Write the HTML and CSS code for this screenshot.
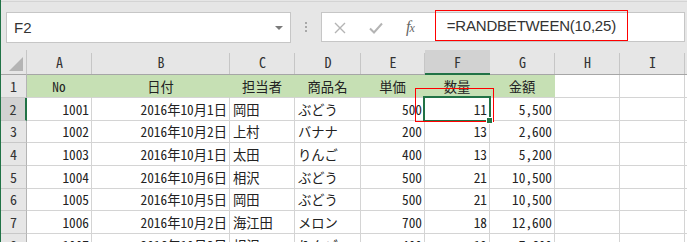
FILE: index.html
```html
<!DOCTYPE html>
<html lang="ja">
<head>
    <meta charset="UTF-8">
    <meta name="viewport" content="width=device-width, initial-scale=1.0">
    <title>RANDBETWEEN</title>
    <link rel="stylesheet" href="styles.css">
</head>
<body>
    <div class="window">
        <div class="toolbar">
            <div class="name-box">
                <span>F2</span>
                <span class="drop"></span>
            </div>
            <div class="grip"><i></i><i></i><i></i></div>
            <div class="formula-bar">
                <svg class="fb-cancel" width="12" height="12" viewBox="0 0 12 12">
                    <path d="M1 1 L11 11 M11 1 L1 11" stroke="#b4b4b4" stroke-width="1.4" fill="none"/>
                </svg>
                <svg class="fb-enter" width="14" height="12" viewBox="0 0 14 12">
                    <path d="M1 6.5 L5 10.5 L13 1.5" stroke="#b4b4b4" stroke-width="2" fill="none"/>
                </svg>
                <span class="fb-fx"><i>f</i><i class="x">x</i></span>
                <span class="formula-text">=RANDBETWEEN(10,25)</span>
            </div>
        </div>

        <div class="sheet">
            <div class="corner"><span class="tri"></span></div>
            <div class="ch">A</div>
            <div class="ch">B</div>
            <div class="ch">C</div>
            <div class="ch">D</div>
            <div class="ch">E</div>
            <div class="ch sel">F</div>
            <div class="ch">G</div>
            <div class="ch">H</div>
            <div class="ch">I</div>
            <div class="ch"></div>

            <div class="rh">1</div>
            <div class="c hd">No</div>
            <div class="c hd">日付</div>
            <div class="c hd">担当者</div>
            <div class="c hd">商品名</div>
            <div class="c hd">単価</div>
            <div class="c hd">数量</div>
            <div class="c hd">金額</div>
            <div class="c"></div>
            <div class="c"></div>
            <div class="c"></div>

            <div class="rh sel">2</div>
            <div class="c r">1001</div>
            <div class="c r">2016年10月1日</div>
            <div class="c">岡田</div>
            <div class="c">ぶどう</div>
            <div class="c r">500</div>
            <div class="c r active">11</div>
            <div class="c r">5,500</div>
            <div class="c"></div>
            <div class="c"></div>
            <div class="c"></div>

            <div class="rh">3</div>
            <div class="c r">1002</div>
            <div class="c r">2016年10月2日</div>
            <div class="c">上村</div>
            <div class="c">バナナ</div>
            <div class="c r">200</div>
            <div class="c r">13</div>
            <div class="c r">2,600</div>
            <div class="c"></div>
            <div class="c"></div>
            <div class="c"></div>

            <div class="rh">4</div>
            <div class="c r">1003</div>
            <div class="c r">2016年10月1日</div>
            <div class="c">太田</div>
            <div class="c">りんご</div>
            <div class="c r">400</div>
            <div class="c r">13</div>
            <div class="c r">5,200</div>
            <div class="c"></div>
            <div class="c"></div>
            <div class="c"></div>

            <div class="rh">5</div>
            <div class="c r">1004</div>
            <div class="c r">2016年10月6日</div>
            <div class="c">相沢</div>
            <div class="c">ぶどう</div>
            <div class="c r">500</div>
            <div class="c r">21</div>
            <div class="c r">10,500</div>
            <div class="c"></div>
            <div class="c"></div>
            <div class="c"></div>

            <div class="rh">6</div>
            <div class="c r">1005</div>
            <div class="c r">2016年10月5日</div>
            <div class="c">岡田</div>
            <div class="c">ぶどう</div>
            <div class="c r">500</div>
            <div class="c r">21</div>
            <div class="c r">10,500</div>
            <div class="c"></div>
            <div class="c"></div>
            <div class="c"></div>

            <div class="rh">7</div>
            <div class="c r">1006</div>
            <div class="c r">2016年10月2日</div>
            <div class="c">海江田</div>
            <div class="c">メロン</div>
            <div class="c r">700</div>
            <div class="c r">18</div>
            <div class="c r">12,600</div>
            <div class="c"></div>
            <div class="c"></div>
            <div class="c"></div>

            <div class="rh">8</div>
            <div class="c r">1007</div>
            <div class="c r">2016年10月3日</div>
            <div class="c">相沢</div>
            <div class="c">りんご</div>
            <div class="c r">400</div>
            <div class="c r">19</div>
            <div class="c r">7,600</div>
            <div class="c"></div>
            <div class="c"></div>
            <div class="c"></div>

            <!-- red annotation around F1:F2 -->
            <div class="mark"></div>
        </div>
    </div>
</body>
</html>
```

FILE: styles.css
```css
html, body {
    margin: 0;
    height: 100%;
    overflow: hidden;
    background-color: #ffffff;
}

.window {
    height: 100%;
    box-sizing: border-box;
    border-left: 1px solid #217346;
    font-family: "Noto Sans CJK JP", "Liberation Sans", sans-serif;
    color: #111;
}

/* ---------- formula bar area ---------- */

.toolbar {
    height: 50px;
    box-sizing: border-box;
    padding-top: 12px;
    display: flex;
    align-items: flex-start;
    background: linear-gradient(#e6e6e6 0 1px, #d4d4d4 1px 2px, #e6e6e6 2px);
}

.name-box {
    margin-left: 5px;
    width: 285px;
    height: 31px;
    box-sizing: border-box;
    border: 1px solid #c6c6c6;
    background-color: #fff;
    display: flex;
    align-items: center;
    justify-content: space-between;
    padding: 0 7px 0 7px;
    font-family: "Liberation Sans", sans-serif;
    font-size: 15px;
    color: #333;
}

.name-box .drop {
    width: 0;
    height: 0;
    border-left: 4px solid transparent;
    border-right: 4px solid transparent;
    border-top: 4px solid #7a7a7a;
    margin-top: 1px;
}

.grip {
    margin: 10px 14px 0 14px;
    display: flex;
    flex-direction: column;
    gap: 2px;
}

.grip i {
    width: 2px;
    height: 2px;
    background-color: #a8a8a8;
}

.formula-bar {
    flex: 1;
    margin-right: 2px;
    height: 30px;
    box-sizing: border-box;
    border: 1px solid #c6c6c6;
    background-color: #fff;
    display: flex;
    align-items: center;
    padding-left: 12px;
}

.fb-cancel {
    margin-top: 1px;
}

.fb-enter {
    margin-left: 23px;
    margin-top: 2px;
}

.fb-fx {
    margin-left: 23px;
    font-family: "Liberation Serif", serif;
    font-size: 16px;
    color: #666;
    line-height: 1;
}

.fb-fx .x {
    font-size: 12px;
    margin-left: -1px;
}

.formula-text {
    align-self: flex-start;
    margin: -3px 0 0 20px;
    height: 31px;
    box-sizing: border-box;
    border: 1px solid #ff0000;
    padding: 0 11px;
    display: flex;
    align-items: center;
    font-family: "Liberation Sans", sans-serif;
    font-size: 15px;
    letter-spacing: -0.2px;
    color: #333;
}

/* ---------- sheet ---------- */

.sheet {
    position: relative;
    display: grid;
    grid-template-columns: 26px 65px 138px 65px 66px 64px 65px 65px 65px 65px 1fr;
    grid-template-rows: 25px 23px repeat(7, 22.67px);
    font-size: 13.3px;
    font-feature-settings: "hwid";
}

.corner,
.ch {
    background: linear-gradient(#c6c6c6, #c6c6c6) right bottom / 1px 21px no-repeat, #e6e6e6;
    border-bottom: 1px solid #a6a6a6;
    display: flex;
    align-items: center;
    justify-content: center;
    font-size: 14px;
    color: #333;
}

.corner {
    position: relative;
    background: #e6e6e6;
    border-right: 1px solid #c6c6c6;
}

.corner .tri {
    position: absolute;
    right: 3px;
    bottom: 3px;
    width: 14px;
    height: 14px;
    background-color: #b4b4b4;
    clip-path: polygon(100% 0, 100% 100%, 0 100%);
}

.ch.sel {
    background: #d2d2d2;
    border-bottom: 2px solid #217346;
}

.rh {
    background-color: #e6e6e6;
    border-right: 1px solid #b4b4b4;
    border-bottom: 1px solid #c8c8c8;
    display: flex;
    align-items: center;
    justify-content: center;
    font-size: 14px;
    color: #333;
}

.rh.sel {
    background-color: #d2d2d2;
    border-right: 2px solid #217346;
}

.c {
    border-right: 1px solid #d4d4d4;
    border-bottom: 1px solid #d4d4d4;
    display: flex;
    align-items: center;
    padding: 1px 3px 0 3px;
    white-space: nowrap;
    overflow: hidden;
    color: #222;
}

.c.r {
    justify-content: flex-end;
    padding-right: 2px;
}

.c.hd {
    background-color: #c6e0b4;
    border-right-color: #c6e0b4;
    justify-content: center;
}

.c.active {
    position: relative;
    overflow: visible;
}

.c.active::after {
    content: "";
    position: absolute;
    left: -2px;
    top: -2px;
    right: -2px;
    bottom: -2px;
    border: 2px solid #217346;
}

.c.active::before {
    content: "";
    position: absolute;
    right: -4px;
    bottom: -4px;
    width: 5px;
    height: 5px;
    background-color: #217346;
    border: 1px solid #fff;
    z-index: 1;
}

.mark {
    position: absolute;
    left: 414px;
    top: 38px;
    width: 79px;
    height: 34px;
    box-sizing: border-box;
    border: 1px solid #ff0000;
}
```
